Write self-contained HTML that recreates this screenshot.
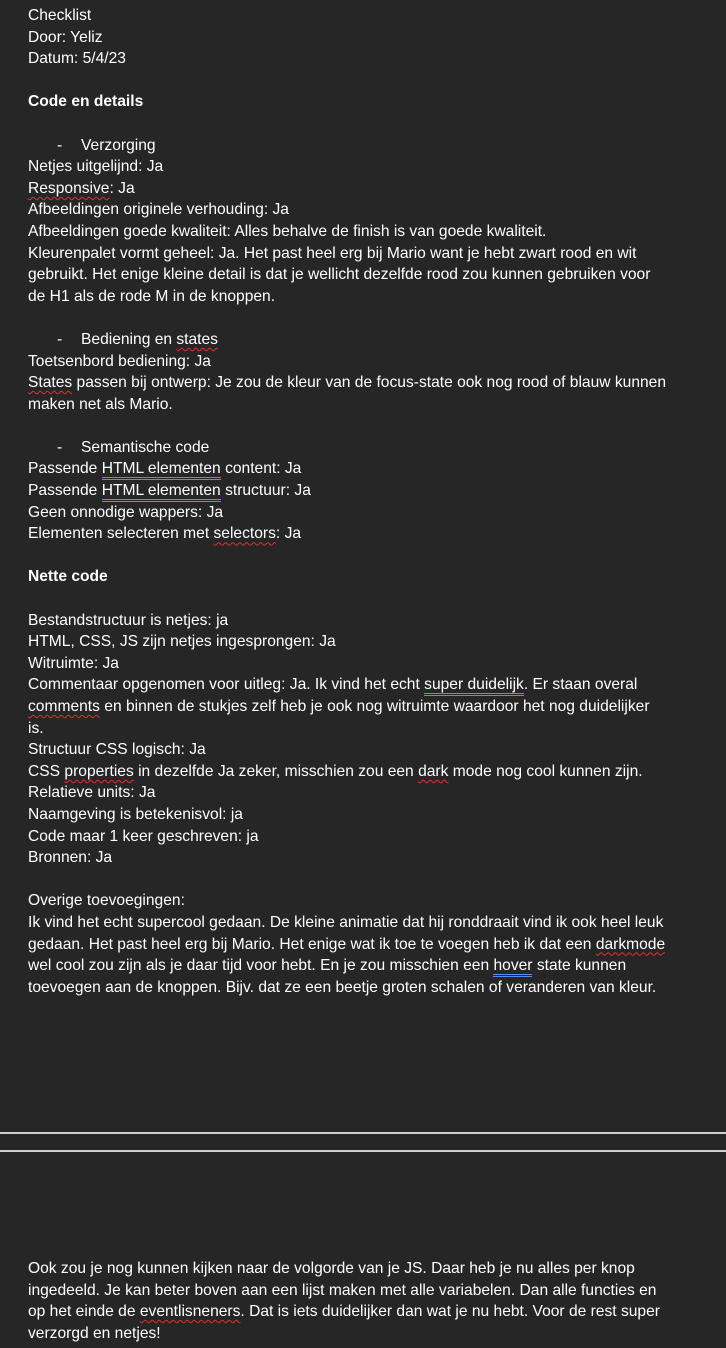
<!DOCTYPE html>
<html><head><meta charset="utf-8"><style>
html,body{margin:0;padding:0;background:#262626;}
body{width:726px;height:1348px;position:relative;overflow:hidden;color:#fff;font-family:"Liberation Sans",sans-serif;font-size:15.6px;letter-spacing:0;}
.blk{position:absolute;left:28px;line-height:21.6px;white-space:nowrap;}
.b{font-weight:bold;}
.li{padding-left:29px;}
.li span.d{display:inline-block;width:24px;}
.sp{text-decoration:underline wavy #e03030;text-decoration-thickness:1px;text-underline-offset:3px;}
.gr{border-bottom:3px double #5b8cf0;}
.hr{position:absolute;left:0;width:726px;height:2px;background:#cfcfcf;}
</style></head><body>
<div class="blk" style="top:5px">
Checklist<br>Door: Yeliz<br>Datum: 5/4/23<br><br>
<span class="b">Code en details</span><br><br>
<div class="li"><span class="d">-</span>Verzorging</div>
Netjes uitgelijnd: Ja<br>
<span class="sp">Responsive</span>: Ja<br>
Afbeeldingen originele verhouding: Ja<br>
Afbeeldingen goede kwaliteit: Alles behalve de finish is van goede kwaliteit.<br>
Kleurenpalet vormt geheel: Ja. Het past heel erg bij Mario want je hebt zwart rood en wit<br>
gebruikt. Het enige kleine detail is dat je wellicht dezelfde rood zou kunnen gebruiken voor<br>
de H1 als de rode M in de knoppen.<br><br>
<div class="li"><span class="d">-</span>Bediening en <span class="sp">states</span></div>
Toetsenbord bediening: Ja<br>
<span class="sp">States</span> passen bij ontwerp: Je zou de kleur van de focus-state ook nog rood of blauw kunnen<br>
maken net als Mario.<br><br>
<div class="li"><span class="d">-</span>Semantische code</div>
Passende <span class="gr">HTML elementen</span> content: Ja<br>
Passende <span class="gr">HTML elementen</span> structuur: Ja<br>
Geen onnodige wappers: Ja<br>
Elementen selecteren met <span class="sp">selectors</span>: Ja<br><br>
<span class="b">Nette code</span><br><br>
Bestandstructuur is netjes: ja<br>
HTML, CSS, JS zijn netjes ingesprongen: Ja<br>
Witruimte: Ja<br>
Commentaar opgenomen voor uitleg: Ja. Ik vind het echt <span class="gr">super duidelijk</span>. Er staan overal<br>
<span class="sp">comments</span> en binnen de stukjes zelf heb je ook nog witruimte waardoor het nog duidelijker<br>
is.<br>
Structuur CSS logisch: Ja<br>
CSS <span class="sp">properties</span> in dezelfde Ja zeker, misschien zou een <span class="sp">dark</span> mode nog cool kunnen zijn.<br>
Relatieve units: Ja<br>
Naamgeving is betekenisvol: ja<br>
Code maar 1 keer geschreven: ja<br>
Bronnen: Ja<br><br>
Overige toevoegingen:<br>
Ik vind het echt supercool gedaan. De kleine animatie dat hij ronddraait vind ik ook heel leuk<br>
gedaan. Het past heel erg bij Mario. Het enige wat ik toe te voegen heb ik dat een <span class="sp">darkmode</span><br>
wel cool zou zijn als je daar tijd voor hebt. En je zou misschien een <span class="gr">hover</span> state kunnen<br>
toevoegen aan de knoppen. Bijv. dat ze een beetje groten schalen of veranderen van kleur.
</div>
<div class="hr" style="top:1132px"></div>
<div class="hr" style="top:1150px"></div>
<div class="blk" style="top:1258px">
Ook zou je nog kunnen kijken naar de volgorde van je JS. Daar heb je nu alles per knop<br>
ingedeeld. Je kan beter boven aan een lijst maken met alle variabelen. Dan alle functies en<br>
op het einde de <span class="sp">eventlisneners</span>. Dat is iets duidelijker dan wat je nu hebt. Voor de rest super<br>
verzorgd en netjes!
</div>
</body></html>
